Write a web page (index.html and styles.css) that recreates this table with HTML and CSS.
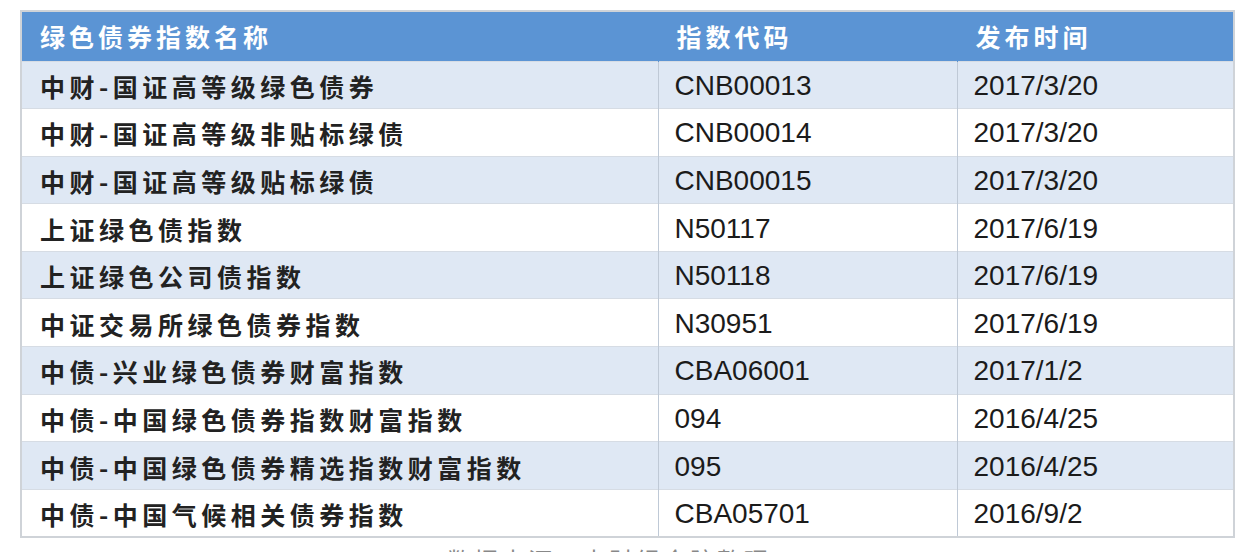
FILE: index.html
```html
<!DOCTYPE html>
<html lang="zh-CN">
<head>
<meta charset="utf-8">
<title>绿色债券指数</title>
<link rel="stylesheet" href="styles.css">
</head>
<body>
<div class="page">
  <table class="bonds">
    <colgroup>
      <col class="c-name">
      <col class="c-code">
      <col class="c-date">
    </colgroup>
    <thead>
      <tr class="head">
        <th>绿色债券指数名称</th>
        <th>指数代码</th>
        <th>发布时间</th>
      </tr>
    </thead>
    <tbody>
      <tr><td class="name">中财-国证高等级绿色债券</td><td class="num">CNB00013</td><td class="num">2017/3/20</td></tr>
      <tr><td class="name">中财-国证高等级非贴标绿债</td><td class="num">CNB00014</td><td class="num">2017/3/20</td></tr>
      <tr><td class="name">中财-国证高等级贴标绿债</td><td class="num">CNB00015</td><td class="num">2017/3/20</td></tr>
      <tr><td class="name">上证绿色债指数</td><td class="num">N50117</td><td class="num">2017/6/19</td></tr>
      <tr><td class="name">上证绿色公司债指数</td><td class="num">N50118</td><td class="num">2017/6/19</td></tr>
      <tr><td class="name">中证交易所绿色债券指数</td><td class="num">N30951</td><td class="num">2017/6/19</td></tr>
      <tr><td class="name">中债-兴业绿色债券财富指数</td><td class="num">CBA06001</td><td class="num">2017/1/2</td></tr>
      <tr><td class="name">中债-中国绿色债券指数财富指数</td><td class="num">094</td><td class="num">2016/4/25</td></tr>
      <tr><td class="name">中债-中国绿色债券精选指数财富指数</td><td class="num">095</td><td class="num">2016/4/25</td></tr>
      <tr><td class="name">中债-中国气候相关债券指数</td><td class="num">CBA05701</td><td class="num">2016/9/2</td></tr>
    </tbody>
  </table>
  <p class="caption">数据来源：中财绿金院整理</p>
</div>
</body>
</html>
```

FILE: styles.css
```css
html, body {
  margin: 0;
  padding: 0;
  background: #ffffff;
}

body {
  width: 1258px;
  height: 552px;
  overflow: hidden;
}

.page {
  padding: 10px 0 0 20px;
}

.bonds {
  width: 1213px;
  border-collapse: collapse;
  table-layout: fixed;
  border: 2px solid #cfd3d8;
  font-family: "Liberation Sans", "Noto Sans CJK SC", sans-serif;
}

.c-name { width: 637px; }
.c-code { width: 299px; }
.c-date { width: 277px; }

.head {
  height: 50px;
  background: #5b94d4;
}

.head th {
  text-align: left;
  color: #ffffff;
  font-family: "Noto Sans CJK SC", sans-serif;
  font-weight: 700;
  font-size: 25px;
  letter-spacing: 4px;
  padding: 0 0 0 18px;
  border-left: 1px solid #5b94d4;
}

.bonds tbody tr {
  height: 47.6px;
  background: #ffffff;
  border-top: 1px solid #d6dce4;
}

.bonds tbody tr:nth-child(odd) {
  background: #dfe8f4;
}

.bonds td {
  padding: 2px 0 0 16px;
  color: #1b1b1b;
  border-left: 1px solid #bfc9d6;
  vertical-align: middle;
}

.bonds td.name {
  padding-left: 18px;
  font-family: "Noto Sans CJK SC", sans-serif;
  font-weight: 700;
  font-size: 25px;
  letter-spacing: 4.5px;
  color: #222222;
}

.bonds td.num {
  font-size: 28px;
  font-weight: 400;
}

.caption {
  margin: 4px 0 0 0;
  text-align: center;
  padding-right: 60px;
  font-family: "Noto Sans CJK SC", sans-serif;
  font-size: 24px;
  color: #888888;
  letter-spacing: 3px;
}
```
